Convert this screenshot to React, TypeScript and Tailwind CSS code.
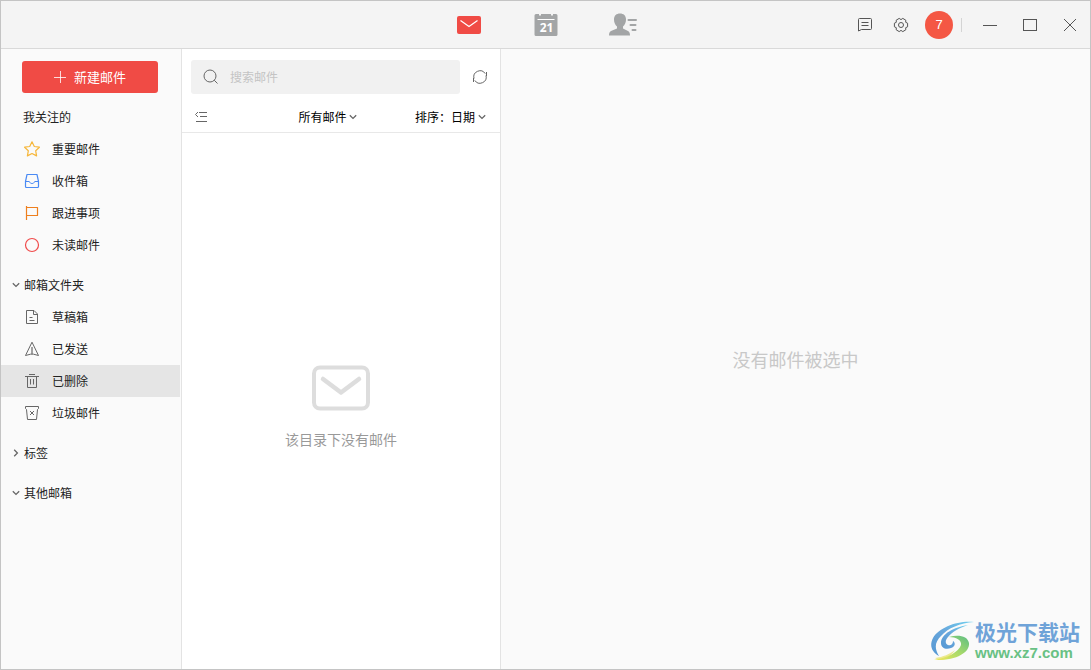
import type { ReactNode } from 'react';
import clsx from 'clsx';

interface NavItem {
  label: string;
  icon: ReactNode;
  active?: boolean;
}

interface IconProps {
  className?: string;
  children: ReactNode;
}

function LineIcon({ className, children }: IconProps) {
  return (
    <svg
      viewBox="0 0 16 16"
      className={clsx('size-4 shrink-0', className)}
      fill="none"
      stroke="currentColor"
      strokeLinejoin="round"
      aria-hidden="true"
    >
      {children}
    </svg>
  );
}

function Chevron({ className }: { className?: string }) {
  return (
    <svg
      viewBox="0 0 8 8"
      className={clsx('size-2 shrink-0 text-[#666666]', className)}
      fill="none"
      stroke="currentColor"
      strokeWidth="1.3"
      aria-hidden="true"
    >
      <path d="M.8 2.2 4 5.4 7.2 2.2" />
    </svg>
  );
}

const FOCUS_ITEMS: NavItem[] = [
  {
    label: '重要邮件',
    icon: (
      <LineIcon className="text-[#f6b73c]">
        <path d="M8 .8 10.3 5.5 15.4 6.2 11.7 9.8 12.6 14.9 8 12.5 3.4 14.9 4.3 9.8.6 6.2 5.7 5.5Z" strokeWidth="1.2" />
      </LineIcon>
    ),
  },
  {
    label: '收件箱',
    icon: (
      <LineIcon className="text-[#4a8af4]">
        <path d="M3 1.5h10l1.5 7v5a1 1 0 0 1-1 1h-11a1 1 0 0 1-1-1v-5Z" strokeWidth="1.2" />
        <path d="M1.5 8.5h3.8c.4 1.3 1.4 2 2.7 2s2.3-.7 2.7-2h3.8" />
      </LineIcon>
    ),
  },
  {
    label: '跟进事项',
    icon: (
      <LineIcon className="text-[#ee7f1d]">
        <path d="M2.5 1v14M2.5 2.5h11v8h-11" strokeWidth="1.2" />
      </LineIcon>
    ),
  },
  {
    label: '未读邮件',
    icon: (
      <LineIcon className="text-[#f04b4b]">
        <circle cx="8" cy="8" r="6.5" strokeWidth="1.2" />
      </LineIcon>
    ),
  },
];

const FOLDER_ITEMS: NavItem[] = [
  {
    label: '草稿箱',
    icon: (
      <LineIcon>
        <path d="M2.5 1.5h7.500l3.500 3.500v9.500h-11ZM9.500 1.500v4h4" />
        <path d="M5.500 8.500h3M5.500 11.500h5" />
      </LineIcon>
    ),
  },
  {
    label: '已发送',
    icon: (
      <LineIcon>
        <path d="M8 1.2 14.5 14.5 9.5 13.2H6.5L1.5 14.5Z" />
        <path d="M7.5 6v7M8.5 6v7" strokeOpacity=".6" />
      </LineIcon>
    ),
  },
  {
    label: '已删除',
    active: true,
    icon: (
      <LineIcon>
        <path d="M1 3.5h14M5 1.5h6M3.5 3.5v11h9v-11M6.5 6v5.5M9.5 6v5.5" />
      </LineIcon>
    ),
  },
  {
    label: '垃圾邮件',
    icon: (
      <LineIcon>
        <path d="M1.5 1.5h13v2l-1 1-1 10h-9l-1-10-1-1Z" />
        <path d="m6 6 4 4m0-4-4 4" />
      </LineIcon>
    ),
  },
];

function NavList({ items }: { items: NavItem[] }) {
  return (
    <ul>
      {items.map((item) => (
        <li key={item.label}>
          <a
            href="#"
            className={clsx(
              'mr-px flex h-8 items-center gap-3 pl-[23px] text-[#666666]',
              item.active && 'bg-[#e5e5e5]'
            )}
          >
            {item.icon}
            <span className="text-[#222222]">{item.label}</span>
          </a>
        </li>
      ))}
    </ul>
  );
}

function SectionToggle({ label, open }: { label: string; open: boolean }) {
  return (
    <button type="button" aria-expanded={open} className="flex h-8 w-full items-center gap-1 pl-[11px]">
      <Chevron className={open ? '' : '-rotate-90'} />
      {label}
    </button>
  );
}

function Sidebar() {
  return (
    <aside className="flex w-[181px] shrink-0 flex-col gap-2 border-r border-[#e3e3e3] pt-3 text-[#222222]">
      <button
        type="button"
        className="mr-[23px] ml-[21px] flex h-8 items-center justify-center gap-2 rounded-[3px] bg-[#f04b45] text-[13px] text-white"
      >
        <svg viewBox="0 0 12 12" className="size-3" stroke="currentColor" strokeOpacity=".8" aria-hidden="true">
          <path d="M6.5 0v12M0 6.5h12" />
        </svg>
        新建邮件
      </button>
      <section>
        <h2 className="flex h-8 items-center pl-[22px]">我关注的</h2>
        <NavList items={FOCUS_ITEMS} />
      </section>
      <section>
        <SectionToggle label="邮箱文件夹" open />
        <NavList items={FOLDER_ITEMS} />
      </section>
      <SectionToggle label="标签" open={false} />
      <SectionToggle label="其他邮箱" open />
    </aside>
  );
}

function TopBar() {
  return (
    <header className="grid h-12 shrink-0 grid-cols-[1fr_auto_1fr] items-center border-b border-[#d9d9d9] bg-[#f4f4f4]">
      <nav className="col-start-2 flex items-center gap-[49px]">
        <button type="button" aria-label="邮件" className="flex w-7 justify-center">
          <svg viewBox="0 0 24 18" className="h-[18px] w-6">
            <rect width="24" height="18" rx="2" fill="#f04b45" />
            <path d="m3.5 4.5 8.5 6 8.5-6" fill="none" stroke="#fff" strokeWidth="1.2" />
          </svg>
        </button>
        <button type="button" aria-label="日历" className="flex w-7 justify-center">
          <svg viewBox="0 0 24 24" className="size-6">
            <path
              d="M2 1h3v1.5h2V1h10v1.5h2V1h3a1.5 1.5 0 0 1 1.5 1.5v19A1.5 1.5 0 0 1 22 23H2a1.5 1.5 0 0 1-1.5-1.5v-19A1.5 1.5 0 0 1 2 1Z"
              fill="#a3a5a6"
            />
            <path d="M3.5 6.5h17" stroke="#fff" />
            <text
              x="12.5"
              y="19"
              textAnchor="middle"
              fill="#fff"
              className="font-['Open_Sans'] text-[12px] font-bold"
            >
              21
            </text>
          </svg>
        </button>
        <button type="button" aria-label="联系人" className="flex w-7 justify-center">
          <svg viewBox="0 0 28 24" className="h-6 w-7" fill="#a3a5a6">
            <path d="M11 .5c3.500 0 6 2 6 6 0 3-1.200 5.500-3 7v2l5 2.500c1.500.8 2 2.200 2 4.500H0c0-2.300.5-3.700 2-4.500l6-2.500v-2c-1.800-1.500-3-4-3-7 0-4 2.500-6 6-6Z" />
            <path d="M19.500 7h7.500M21.500 12h5M23.500 17h3" stroke="#a3a5a6" strokeWidth="2" strokeLinecap="round" />
          </svg>
        </button>
      </nav>
      <div className="flex items-center justify-self-end pr-[13px] text-[#555555]">
        <button type="button" aria-label="消息">
          <LineIcon>
            <path d="M2.5 1.5h11a1 1 0 0 1 1 1v9a1 1 0 0 1-1 1h-9l-3 1.500v-11.500a1 1 0 0 1 1-1Z" />
            <path d="M4.5 5.5h7M4.5 8.5h7" />
          </LineIcon>
        </button>
        <button type="button" aria-label="设置" className="ml-5">
          <LineIcon>
            <path d="M14.6 6.2V9.8L12.7 10.7 12.8 12.8 9.8 14.6 8 13.4 6.2 14.6 3.2 12.8 3.3 10.7 1.4 9.8V6.2L3.3 5.3 3.2 3.2 6.2 1.4 8 2.6 9.8 1.4 12.8 3.2 12.7 5.3Z" />
            <circle cx="8" cy="8" r="2.5" />
          </LineIcon>
        </button>
        <button
          type="button"
          aria-label="账户"
          className="ml-4 size-7 rounded-full bg-[#f45744] font-['Liberation_Sans'] text-[13px] text-white"
        >
          7
        </button>
        <span className="ml-2 h-[14px] w-px bg-[#d4d4d4]" />
        <div className="ml-[21px] flex gap-[26px]">
          <button type="button" aria-label="最小化">
            <svg viewBox="0 0 14 14" className="size-[14px]" stroke="currentColor">
              <path d="M0 7.5h14" />
            </svg>
          </button>
          <button type="button" aria-label="最大化">
            <svg viewBox="0 0 14 14" className="size-[14px]" fill="none" stroke="currentColor">
              <rect x=".5" y="1.5" width="13" height="11" />
            </svg>
          </button>
          <button type="button" aria-label="关闭">
            <svg viewBox="0 0 14 14" className="size-[14px]" stroke="currentColor">
              <path d="m1 1 12 12M13 1 1 13" />
            </svg>
          </button>
        </div>
      </div>
    </header>
  );
}

function MailList() {
  return (
    <section className="flex w-[319px] shrink-0 flex-col border-r border-[#e3e3e3] bg-white">
      <div className="flex items-center gap-3 pt-[11px] pr-3 pl-[9px]">
        <label className="flex h-[34px] min-w-0 flex-1 items-center gap-3 rounded-[3px] bg-[#f1f1f1] px-[11px] text-[#666666]">
          <LineIcon>
            <circle cx="8" cy="7" r="6" />
            <path d="m12.200 11.200 3.300 3.300" />
          </LineIcon>
          <input
            type="search"
            aria-label="搜索邮件"
            placeholder="搜索邮件"
            className="min-w-0 flex-1 bg-transparent outline-none placeholder:text-[#c4c4c4]"
          />
        </label>
        <button type="button" aria-label="刷新" className="text-[#666666]">
          <LineIcon>
            <path d="M2 9.5A6.200 6.200 0 0 1 13.200 4.600M14 6.500A6.200 6.200 0 0 1 2.800 11.400" />
            <path d="M1.500 13v-4M14.500 3v4" />
          </LineIcon>
        </button>
      </div>
      <div className="mt-2 flex h-[31px] items-center justify-between border-b border-[#e8e8e8] pr-[14px] pl-[11px] text-black">
        <button type="button" aria-label="收起列表" className="text-[#666666]">
          <LineIcon>
            <path d="M6 3.500h8M7 7.500h7M3 12.500h11M5 3l-2.500 2.500L5 8" />
          </LineIcon>
        </button>
        <div className="ml-8 flex items-center gap-[2px]">
          <select aria-label="筛选邮件" className="appearance-none bg-transparent">
            <option>所有邮件</option>
          </select>
          <Chevron />
        </div>
        <div className="flex items-center gap-[2px]">
          <label htmlFor="sort">排序：</label>
          <select id="sort" className="-ml-[2px] appearance-none bg-transparent">
            <option>日期</option>
          </select>
          <Chevron />
        </div>
      </div>
      <div className="flex flex-1 flex-col items-center justify-center gap-[18px] pt-3">
        <svg viewBox="0 0 60 46" className="h-[46px] w-[60px]" fill="none" stroke="#dddddd" strokeWidth="4">
          <rect x="3" y="2.5" width="54" height="41" rx="6" />
          <path d="m12 14 18 13.5L48 14" strokeWidth="4.5" strokeLinecap="round" strokeLinejoin="round" />
        </svg>
        <p className="text-[14px] leading-5 text-[#999999]">该目录下没有邮件</p>
      </div>
    </section>
  );
}

function SiteMark() {
  return (
    <div className="absolute right-[10px] bottom-[6px] flex items-center gap-px">
      <svg viewBox="0 0 44 42" className="h-[42px] w-11" aria-hidden="true">
        <defs>
          <linearGradient id="wave-blue" x1="0" y1="1" x2="1" y2="0">
            <stop offset="0" stopColor="#5597d3" />
            <stop offset=".5" stopColor="#68a7dc" />
            <stop offset="1" stopColor="#6fd0ef" />
          </linearGradient>
          <linearGradient id="wave-green" x1="0" y1="1" x2="1" y2="0">
            <stop offset="0" stopColor="#f0e957" />
            <stop offset=".5" stopColor="#a9da6a" />
            <stop offset="1" stopColor="#5bbd84" />
          </linearGradient>
        </defs>
        <path
          d="M44 2C29 0 9 7 3 18-1 26 2 32 9 36 4 28 5 22 11 16 18 8 30 3 44 2Z"
          fill="url(#wave-blue)"
        />
        <path
          d="M38 5C24 7 11 14 11 23c0 5 5 7 10 5 4-1 5-5 2-7 0 3-2 5-5 4-3-1-3-5 0-8 4-5 11-9 20-12Z"
          fill="url(#wave-blue)"
        />
        <path
          d="M19 17c9-3 19-1 20 6C40 33 25 41 4 40c13-2 25-8 27-15 1-5-5-8-12-8Z"
          fill="url(#wave-green)"
        />
        <path d="M5 38C13 37 20 34 25 30 19 39 11 42 5 38Z" fill="#e5e262" fillOpacity=".7" />
      </svg>
      <div>
        <p className="text-[21px] leading-6 font-bold text-[#6fa3d8]">极光下载站</p>
        <p className="font-['Liberation_Sans'] text-[15px] leading-5 font-bold text-[#68c184]">www.xz7.com</p>
      </div>
    </div>
  );
}

export default function App() {
  return (
    <div className="relative flex min-h-screen flex-col border border-[#c4c4c4] bg-[#fafafa] font-['Noto_Sans_CJK_SC',sans-serif] text-[12px]">
      <TopBar />
      <div className="flex flex-1">
        <Sidebar />
        <MailList />
        <main className="flex flex-1 items-center justify-center">
          <p className="text-[18px] text-[#c8c8c8]">没有邮件被选中</p>
        </main>
      </div>
      <SiteMark />
    </div>
  );
}
